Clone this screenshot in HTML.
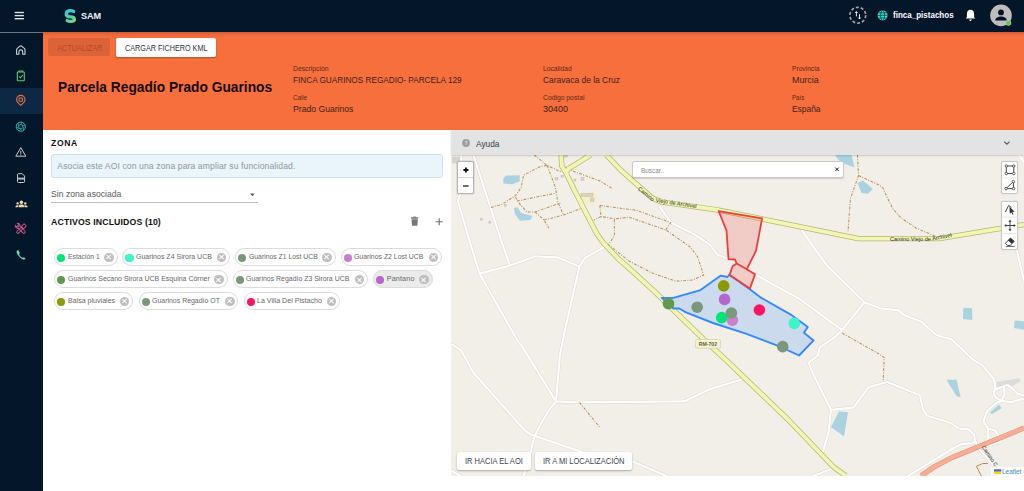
<!DOCTYPE html><html><head><meta charset="utf-8"><style>
*{margin:0;padding:0;box-sizing:border-box}
html,body{width:1024px;height:491px;overflow:hidden;background:#fff;font-family:"Liberation Sans",sans-serif}
.a{position:absolute}
.t{position:absolute;white-space:nowrap;line-height:1}
#hdr{left:0;top:0;width:1024px;height:32px;background:#03162a}
#side{left:0;top:32px;width:43px;height:459px;background:#03162a;border-top:1px solid #6b7480}
#sel{left:0;top:88px;width:43px;height:26px;background:#0d2845}
#orange{left:43px;top:32px;width:981px;height:98px;background:#f86f3e}
#map{left:452px;top:130px;width:572px;height:346px;background:#f2efe9;overflow:hidden}
#help{left:452px;top:130px;width:572px;height:25px;background:#e0e0e0;border-top-left-radius:3px;box-shadow:0 1px 2px rgba(0,0,0,.12)}
.lbl{font-size:6.5px;color:#5a2c18}
.val{font-size:8.5px;color:#3e2216}
.chip{position:absolute;height:18px;border:1px solid #dcdcdc;border-radius:9px;background:#fff}
.chip .d{position:absolute;left:2.5px;top:4px;width:8px;height:8px;border-radius:50%}
.chip .x{position:absolute;top:3.5px;width:9.5px;height:9.5px;border-radius:50%;background:#bfbfbf}
.chip .x:before,.chip .x:after{content:"";position:absolute;left:4.1px;top:1.8px;width:1.3px;height:6px;background:#fff;transform:rotate(45deg)}
.chip .x:after{transform:rotate(-45deg)}
.chip .tx{position:absolute;left:13px;top:4.5px;font-size:7px;color:#666;white-space:nowrap;line-height:1}
.btn{position:absolute;background:#fff;border-radius:2px;box-shadow:0 1px 2px rgba(0,0,0,.3)}
</style></head><body>
<div id="hdr" class="a"></div><div id="side" class="a"></div><div id="sel" class="a"></div><div id="orange" class="a"></div><div class="a" style="left:43px;top:32px;width:981px;height:5px;background:linear-gradient(rgba(0,0,0,.17),rgba(0,0,0,.06) 50%,rgba(0,0,0,0))"></div>
<svg class="a" style="left:0;top:0" width="1024" height="270" viewBox="0 0 1024 270">
<defs><linearGradient id="lg" x1="0" y1="0" x2="1" y2="1"><stop offset="0" stop-color="#39c9d6"/><stop offset="1" stop-color="#7fdc7a"/></linearGradient></defs>
<!-- hamburger -->
<g fill="#dfe3e8"><rect x="14.7" y="11.8" width="9.2" height="1.4"/><rect x="14.7" y="14.9" width="9.2" height="1.4"/><rect x="14.7" y="18" width="9.2" height="1.4"/></g>
<!-- logo S -->
<defs><linearGradient id="sg" gradientUnits="userSpaceOnUse" x1="66" y1="11" x2="74" y2="22"><stop offset="0" stop-color="#35c6d8"/><stop offset=".45" stop-color="#4fcdb8"/><stop offset="1" stop-color="#80db7c"/></linearGradient></defs>
<path d="M73.6 11.4 C72.6 10.8 71.4 10.6 70.2 10.6 C67.6 10.6 66.3 12.2 66.3 14 C66.3 15.8 68 16.8 70.4 16.8 C72.8 16.8 74.4 17.8 74.4 19.6 C74.4 21.4 72.8 21.4 70.6 21.4 C69.4 21.4 68.2 21.2 67.2 20.6" fill="none" stroke="url(#sg)" stroke-width="3.3" stroke-linecap="round"/>
<!-- right header icons -->
<circle cx="857.8" cy="15.2" r="7.9" fill="none" stroke="#a3a3a3" stroke-width="1.7" stroke-dasharray="3 2"/>
<g stroke="#fff" stroke-width=".9" fill="none"><path d="M856.4 16.4 V11.8 M855.2 13 L856.4 11.6 L857.6 13"/><path d="M859.5 14.2 V18.8 M858.3 17.6 L859.5 19 L860.7 17.6"/></g>
<circle cx="882.6" cy="15.4" r="6.4" fill="#000a12"/>
<circle cx="882.6" cy="15.4" r="5" fill="#33ddd5"/>
<g stroke="#0a3a40" stroke-width=".75" fill="none"><ellipse cx="882.6" cy="15.4" rx="2" ry="5"/><path d="M877.6 15.4 H887.6 M878.2 12.8 H887 M878.2 18 H887"/></g>
<path d="M970.5 9.8 C968 9.8 966.9 11.8 966.9 14 V17.2 L965.6 18.6 H975.4 L974.1 17.2 V14 C974.1 11.8 973 9.8 970.5 9.8 Z M969.2 19.5 H971.8 C971.8 20.4 971.2 21 970.5 21 C969.8 21 969.2 20.4 969.2 19.5Z" fill="#fff"/>
<circle cx="1001" cy="15.4" r="10.8" fill="#bdbdbd"/>
<circle cx="1001" cy="12.4" r="2.9" fill="#031428"/>
<path d="M995.3 20.6 C995.3 17.6 998.5 16.6 1001 16.6 C1003.5 16.6 1006.7 17.6 1006.7 20.6 Z" fill="#031428"/>
<circle cx="1008.4" cy="23" r="2.8" fill="#bdbdbd"/>
<circle cx="1008.4" cy="23" r="2.1" fill="#4cd137"/>
<!-- sidebar icons -->
<path d="M16.6 54.2 V49.8 Q16.6 49 17.3 48.4 L19.9 46.2 Q20.8 45.5 21.7 46.2 L24.3 48.4 Q25 49 25 49.8 V54.2 H22.7 V51.8 Q22.7 49.9 20.8 49.9 Q18.9 49.9 18.9 51.8 V54.2 Z" fill="none" stroke="#cfd3d8" stroke-width="1.1" stroke-linejoin="round"/>
<g fill="none" stroke="#67c26f" stroke-width="1.1"><rect x="17.3" y="72" width="7" height="8.8" rx="0.8"/><path d="M18.9 72 V71 H22.7 V72"/><path d="M19 76.4 L20.4 77.8 L22.8 75"/></g>
<g fill="none" stroke="#e8733f" stroke-width="1.1"><path d="M20.8 105.4 C18.2 103.4 16.6 101.6 16.6 99.6 A4.2 4.2 0 0 1 25 99.6 C25 101.6 23.4 103.4 20.8 105.4 Z"/><circle cx="20.8" cy="99.8" r="1.9"/></g>
<g fill="none" stroke="#2bbfb3" stroke-width="1"><circle cx="20.8" cy="126.7" r="4.6"/><path d="M23.02 127.30 L19.36 130.96 M21.40 128.92 L16.39 127.58 M19.17 128.33 L17.83 123.32 M18.58 126.10 L22.24 122.44 M20.20 124.48 L25.21 125.82 M22.43 125.07 L23.77 130.08" stroke-width=".8"/></g>
<g fill="none" stroke="#c7ccd2" stroke-width="1"><path d="M20.8 147.6 L25.8 156.2 H15.8 Z"/><path d="M20.8 150.8 V153.6"/></g><circle cx="20.8" cy="154.8" r="0.5" fill="#c7ccd2"/>
<g><path d="M18.6 173.7 H22.2 L24.6 176.1 V181.4 Q24.6 182.5 23.5 182.5 H18.6 Q17.5 182.5 17.5 181.4 V174.8 Q17.5 173.7 18.6 173.7 Z" fill="none" stroke="#c9cdd2" stroke-width="1"/><rect x="18.1" y="177.6" width="6" height="2" fill="#b3b8be"/></g>
<g fill="#f2dcae"><circle cx="21.4" cy="202.2" r="1.75"/><circle cx="17.6" cy="203.4" r="1.2"/><circle cx="25.3" cy="203.4" r="1.2"/><path d="M18.9 207.3 V205.8 Q18.9 204.5 20.3 204.5 H22.5 Q23.9 204.5 23.9 205.8 V207.3 Z M15.3 207.3 Q15.3 205.2 17.4 205.2 H18.4 V207.3 Z M24.4 205.2 H25.6 Q27.7 205.2 27.7 207.3 H24.4 Z"/></g>
<g fill="none" stroke="#c9558a" stroke-width=".95"><g transform="rotate(-45 21 229)"><rect x="19.7" y="225.2" width="2.6" height="9.2" rx="1.3"/><path d="M19.7 226.4 C18.2 225.6 18.2 223.2 19.6 222.4 V224.4 H22.4 V222.4 C23.8 223.2 23.8 225.6 22.3 226.4"/></g><g transform="rotate(45 21 229)"><rect x="19.8" y="227.6" width="2.4" height="7" rx="1.2"/><rect x="19.4" y="223" width="3.2" height="4" rx=".6"/></g></g>
<path d="M17 250.6 C16.4 251.2 16.4 252.6 17.6 254.4 C18.8 256.4 21.2 258.6 23.2 259.4 C24.4 259.8 25.2 259.4 25.6 258.8 L24 257.2 L22.4 257.8 C21 257 19.8 255.8 19.1 254.4 L19.8 252.8 L18.4 250.2 Z" fill="#62e3b5"/>
</svg>
<div class="t" style="left:80.80px;top:11.08px;font-size:9.59px;color:#f2f4f6;font-weight:bold;transform:scaleX(0.9475);transform-origin:0 0;">SAM</div>
<div class="t" style="left:892.60px;top:11.32px;font-size:8.72px;color:#fff;font-weight:bold;transform:scaleX(0.9194);transform-origin:0 0;">finca_pistachos</div>
<div class="a" style="left:48px;top:38px;width:62px;height:18.4px;background:rgba(0,0,0,.11);border-radius:2px"></div>
<div class="t" style="left:56.70px;top:43.52px;font-size:8.72px;color:rgba(0,0,0,.25);transform:scaleX(0.8365);transform-origin:0 0;">ACTUALIZAR</div>
<div class="btn" style="left:116px;top:38px;width:100px;height:18.5px"></div>
<div class="t" style="left:124.50px;top:43.52px;font-size:8.72px;color:#2e3540;transform:scaleX(0.8305);transform-origin:0 0;">CARGAR FICHERO KML</div>
<div class="t" style="left:57.90px;top:80.81px;font-size:13.81px;color:#150b06;font-weight:bold;transform:scaleX(0.9974);transform-origin:0 0;">Parcela Regadío Prado Guarinos</div>
<div class="t" style="left:293.30px;top:66.17px;font-size:7.12px;color:#5b2a15;transform:scaleX(0.9541);transform-origin:0 0;">Descripción</div>
<div class="t" style="left:293.30px;top:76.27px;font-size:9.01px;color:#40231a;transform:scaleX(0.9118);transform-origin:0 0;">FINCA GUARINOS REGADIO- PARCELA 129</div>
<div class="t" style="left:293.30px;top:94.67px;font-size:7.12px;color:#5b2a15;transform:scaleX(0.8780);transform-origin:0 0;">Calle</div>
<div class="t" style="left:293.30px;top:104.67px;font-size:9.01px;color:#40231a;transform:scaleX(0.9585);transform-origin:0 0;">Prado Guarinos</div>
<div class="t" style="left:542.50px;top:66.17px;font-size:7.12px;color:#5b2a15;transform:scaleX(0.9429);transform-origin:0 0;">Localidad</div>
<div class="t" style="left:542.50px;top:76.27px;font-size:9.01px;color:#40231a;transform:scaleX(0.9374);transform-origin:0 0;">Caravaca de la Cruz</div>
<div class="t" style="left:542.50px;top:94.67px;font-size:7.12px;color:#5b2a15;transform:scaleX(0.9528);transform-origin:0 0;">Codigo postal</div>
<div class="t" style="left:542.50px;top:104.67px;font-size:9.01px;color:#40231a;transform:scaleX(0.9976);transform-origin:0 0;">30400</div>
<div class="t" style="left:792.00px;top:66.17px;font-size:7.12px;color:#5b2a15;transform:scaleX(0.9354);transform-origin:0 0;">Provincia</div>
<div class="t" style="left:792.00px;top:76.27px;font-size:9.01px;color:#40231a;transform:scaleX(0.9893);transform-origin:0 0;">Murcia</div>
<div class="t" style="left:792.00px;top:94.67px;font-size:7.12px;color:#5b2a15;transform:scaleX(0.8631);transform-origin:0 0;">País</div>
<div class="t" style="left:792.00px;top:104.67px;font-size:9.01px;color:#40231a;transform:scaleX(0.9324);transform-origin:0 0;">España</div>
<div class="t" style="left:51.10px;top:139.14px;font-size:8.58px;color:#121212;font-weight:bold;letter-spacing:0.602px;">ZONA</div>
<div class="a" style="left:51px;top:154px;width:392px;height:23.5px;background:#eaf4fb;border:1px solid #cae2f2;border-radius:3px"></div>
<div class="t" style="left:57.30px;top:162.14px;font-size:8.58px;color:#8e98a2;letter-spacing:0.109px;">Asocia este AOI con una zona para ampliar su funcionalidad.</div>
<div class="t" style="left:51.10px;top:190.04px;font-size:8.58px;color:#5a5a5a;">Sin zona asociada</div>
<div class="a" style="left:51px;top:202px;width:207px;height:1px;background:#bdbdbd"></div>
<svg class="a" style="left:248px;top:192px" width="10" height="6"><path d="M2 1.6 H6.8 L4.4 4.3 Z" fill="#5c5c5c"/></svg>
<div class="t" style="left:51.10px;top:217.82px;font-size:8.72px;color:#121212;font-weight:bold;letter-spacing:0.125px;">ACTIVOS INCLUIDOS (10)</div>
<svg class="a" style="left:405px;top:212px" width="42" height="18"><g fill="#777"><rect x="6" y="5.2" width="7.4" height="1.5" rx=".4"/><rect x="8.3" y="4.6" width="2.8" height="1"/><path d="M6.6 7.2 H12.8 L12.4 13.8 H7 Z"/></g><path d="M30.7 9.7 H37.7 M34.2 6.2 V13.2" stroke="#6f6f6f" stroke-width="1.1"/></svg>
<div class="chip" style="left:54.0px;top:248.0px;width:63.5px;background:#fff"><div class="d" style="background:#00e676;left:2.3px;top:4.5px;width:8.2px;height:8.2px"></div><div class="x" style="left:49.2px"></div></div>
<div class="t" style="left:67.70px;top:253.15px;font-size:7.27px;color:#676767;transform:scaleX(0.9341);transform-origin:0 0;">Estación 1</div>
<div class="chip" style="left:122.1px;top:248.0px;width:107.7px;background:#fff"><div class="d" style="background:#3df5c6;left:2.3px;top:4.5px;width:8.2px;height:8.2px"></div><div class="x" style="left:93.5px"></div></div>
<div class="t" style="left:135.80px;top:253.15px;font-size:7.27px;color:#676767;transform:scaleX(0.9637);transform-origin:0 0;">Guarinos Z4 Sirora UCB</div>
<div class="chip" style="left:235.0px;top:248.0px;width:100.5px;background:#fff"><div class="d" style="background:#7d977c;left:2.3px;top:4.5px;width:8.2px;height:8.2px"></div><div class="x" style="left:86.2px"></div></div>
<div class="t" style="left:248.70px;top:253.15px;font-size:7.27px;color:#676767;transform:scaleX(0.9397);transform-origin:0 0;">Guarinos Z1 Lost UCB</div>
<div class="chip" style="left:340.7px;top:248.0px;width:101.2px;background:#fff"><div class="d" style="background:#c77ed0;left:2.3px;top:4.5px;width:8.2px;height:8.2px"></div><div class="x" style="left:86.9px"></div></div>
<div class="t" style="left:354.40px;top:253.15px;font-size:7.27px;color:#676767;transform:scaleX(0.9493);transform-origin:0 0;">Guarinos Z2 Lost UCB</div>
<div class="chip" style="left:54.0px;top:270.3px;width:173.6px;background:#fff"><div class="d" style="background:#5f9949;left:2.3px;top:4.5px;width:8.2px;height:8.2px"></div><div class="x" style="left:159.3px"></div></div>
<div class="t" style="left:67.70px;top:275.45px;font-size:7.27px;color:#676767;transform:scaleX(0.9617);transform-origin:0 0;">Guarinos Secano Sirora UCB Esquina Córner</div>
<div class="chip" style="left:232.7px;top:270.3px;width:135.1px;background:#fff"><div class="d" style="background:#7d977c;left:2.3px;top:4.5px;width:8.2px;height:8.2px"></div><div class="x" style="left:120.9px"></div></div>
<div class="t" style="left:246.40px;top:275.45px;font-size:7.27px;color:#676767;transform:scaleX(0.9542);transform-origin:0 0;">Guarinos Regadío Z3 Sirora UCB</div>
<div class="chip" style="left:373.0px;top:270.3px;width:59.6px;background:#ebebeb"><div class="d" style="background:#b565cd;left:2.3px;top:4.5px;width:8.2px;height:8.2px"></div><div class="x" style="left:45.4px"></div></div>
<div class="t" style="left:386.70px;top:275.45px;font-size:7.27px;color:#676767;letter-spacing:0.121px;">Pantano</div>
<div class="chip" style="left:54.0px;top:292.0px;width:78.9px;background:#fff"><div class="d" style="background:#8a9a00;left:2.3px;top:4.5px;width:8.2px;height:8.2px"></div><div class="x" style="left:64.7px"></div></div>
<div class="t" style="left:67.70px;top:297.15px;font-size:7.27px;color:#676767;transform:scaleX(0.9716);transform-origin:0 0;">Balsa pluviales</div>
<div class="chip" style="left:138.5px;top:292.0px;width:99.8px;background:#fff"><div class="d" style="background:#7d977c;left:2.3px;top:4.5px;width:8.2px;height:8.2px"></div><div class="x" style="left:85.6px"></div></div>
<div class="t" style="left:152.20px;top:297.15px;font-size:7.27px;color:#676767;transform:scaleX(0.9564);transform-origin:0 0;">Guarinos Regadío OT</div>
<div class="chip" style="left:243.5px;top:292.0px;width:96.7px;background:#fff"><div class="d" style="background:#ff1464;left:2.3px;top:4.5px;width:8.2px;height:8.2px"></div><div class="x" style="left:82.4px"></div></div>
<div class="t" style="left:257.20px;top:297.15px;font-size:7.27px;color:#676767;transform:scaleX(0.9756);transform-origin:0 0;">La Villa Del Pistacho</div>
<svg class="a" style="left:451px;top:130px" width="573" height="346" viewBox="451 130 573 346">
<rect x="451" y="130" width="573" height="346" fill="#f2efe9"/>
<path d="M503.3 178.5 L506.0 175.6 L519.8 175.3 L519.5 181.5 L512.0 184.2 L503.3 183.5Z" fill="#aad3df"/>
<path d="M514.0 208.0 L517.5 207.3 L521.0 213.0 L532.6 216.0 L530.5 220.0 L520.0 220.8 L515.0 214.0Z" fill="#aad3df"/>
<path d="M835.0 155.0 L851.5 155.0 L854.5 167.3 L846.0 164.5 L838.5 160.0Z" fill="#aad3df"/>
<path d="M857.5 183.0 L863.0 180.6 L872.8 189.0 L868.0 193.8 L861.5 193.0Z" fill="#aad3df"/>
<path d="M963.3 307.7 L972.0 308.2 L972.4 320.0 L963.0 319.0Z" fill="#aad3df"/>
<path d="M1014.6 320.5 L1024.0 321.2 L1024.0 329.7 L1014.0 328.0Z" fill="#aad3df"/>
<path d="M946.4 379.8 L956.6 379.8 L960.7 397.3 L956.6 396.3Z" fill="#aad3df"/>
<path d="M839.1 411.4 L848.0 412.2 L844.0 436.6 L831.0 426.9Z" fill="#aad3df"/>
<path d="M989.9 412.5 L999.0 404.6 L1001.5 408.2 L991.7 414.3Z" fill="#aad3df"/>
<rect x="452" y="157" width="8.5" height="6.4" fill="#d6d3cf"/>
<path d="M996.6 382 L1018.6 378.3 L1021 380.8 L1013.7 385.6 L996.6 387.5Z" fill="#dcdcdc"/>
<path d="M580.6 192.3 L593.6 191.5 L597 197 L595 205 L582 203Z" fill="#f3efc6"/>
<g fill="#d9d0c9" stroke="#c4b6ab" stroke-width=".4"><rect x="581" y="193.5" width="12" height="3"/><rect x="590.5" y="198" width="3.5" height="3.5"/><rect x="555" y="177.5" width="3" height="2.5"/><rect x="561" y="175.5" width="2.5" height="2"/><rect x="569" y="165" width="3" height="2.5"/><rect x="574" y="179" width="2" height="2"/><rect x="581" y="177.5" width="3" height="3"/><rect x="564.5" y="155" width="3" height="2"/><rect x="480.6" y="218.6" width="1.8" height="1.8"/><rect x="488.9" y="221.6" width="1.8" height="1.8"/><rect x="504.4" y="204.2" width="2" height="2"/></g>
<path d="M461.2 155.0 L461.5 162.0 L460.0 195.2 L457.9 201.3 L460.5 210.0 L469.3 240.0 L479.5 273.6 L517.2 340.0 L523.3 348.3 L556.0 401.4 M473.4 155.0 L501.0 240.0 L510.0 265.5 M479.5 273.6 L510.0 265.5 L535.6 256.3 L557.0 257.3 L579.4 266.5 M579.4 266.5 L584.5 258.3 L602.0 248.2 L607.0 245.0 M579.4 266.5 L565.0 330.0 L560.0 354.5 L556.0 401.4 M556.0 401.4 L578.5 402.4 L683.9 401.4 L710.3 389.1 L743.3 379.0 M556.0 401.4 L547.8 411.6 L537.6 430.0 L534.2 437.5 L530.2 453.7 L523.7 476.0 M452.0 344.3 L461.2 350.4 L473.4 372.8 L524.3 430.0 L530.2 434.2 L582.3 452.1 L634.0 461.9 L666.5 476.0 M452.0 470.8 L460.0 476.0 M659.7 206.7 L670.7 222.6 L695.1 234.8 L709.8 244.6 L717.1 254.4 L728.5 259.1 M755.0 274.3 L798.4 298.2 L842.0 330.0 L836.0 336.1 L819.8 347.3 L817.8 355.5 L808.6 362.6 L811.6 370.8 L831.0 409.8 L828.5 432.6 L822.8 452.1 M799.3 226.4 L815.6 250.0 L827.8 266.5 L864.5 302.2 L880.0 308.3 L898.5 310.3 L904.6 315.4 L921.0 321.5 L935.0 333.9 L939.3 336.1 L951.5 339.2 L973.4 360.0 L982.0 364.9 L994.2 379.5 L995.4 388.1 L993.6 393.0 L995.4 397.2 L1001.5 400.9 M864.5 302.2 L842.0 330.0 M831.0 409.8 L853.8 407.3 L868.6 387.1 L880.0 384.0 L887.3 382.0 L919.9 395.3 L923.0 409.5 L927.0 415.7 L945.7 421.2 L952.8 424.3 L958.5 428.5 L968.5 429.3 L974.2 435.0 L975.0 440.7 L973.5 443.1 L961.4 444.2 L952.8 448.5 L908.2 476.0 M975.0 440.7 L980.0 450.0 L995.6 467.8 M996.0 389.3 L1004.0 386.3 L1007.6 385.0 L1011.3 387.5 L1017.4 393.6 L1024.0 395.4 M1004.0 386.3 L1004.6 394.2 L1001.5 400.9 L1011.3 402.1 L1024.0 398.5 M1001.5 400.9 L996.6 402.7 L986.9 411.3 L983.5 421.4 L987.8 428.5 L988.5 437.8 L981.4 447.8 M987.8 428.5 L995.6 430.7 L998.5 436.4 L999.9 442.1 L981.4 447.8 M1016.7 250.0 L1024.0 280.8 M1019.0 155.0 L1024.0 162.0 M813.0 476.0 L831.0 469.2 M574.1 170.4 L579.8 173.6" fill="none" stroke="#d8d3cc" stroke-width="3" stroke-linejoin="round" stroke-linecap="round"/>
<path d="M461.2 155.0 L461.5 162.0 L460.0 195.2 L457.9 201.3 L460.5 210.0 L469.3 240.0 L479.5 273.6 L517.2 340.0 L523.3 348.3 L556.0 401.4 M473.4 155.0 L501.0 240.0 L510.0 265.5 M479.5 273.6 L510.0 265.5 L535.6 256.3 L557.0 257.3 L579.4 266.5 M579.4 266.5 L584.5 258.3 L602.0 248.2 L607.0 245.0 M579.4 266.5 L565.0 330.0 L560.0 354.5 L556.0 401.4 M556.0 401.4 L578.5 402.4 L683.9 401.4 L710.3 389.1 L743.3 379.0 M556.0 401.4 L547.8 411.6 L537.6 430.0 L534.2 437.5 L530.2 453.7 L523.7 476.0 M452.0 344.3 L461.2 350.4 L473.4 372.8 L524.3 430.0 L530.2 434.2 L582.3 452.1 L634.0 461.9 L666.5 476.0 M452.0 470.8 L460.0 476.0 M659.7 206.7 L670.7 222.6 L695.1 234.8 L709.8 244.6 L717.1 254.4 L728.5 259.1 M755.0 274.3 L798.4 298.2 L842.0 330.0 L836.0 336.1 L819.8 347.3 L817.8 355.5 L808.6 362.6 L811.6 370.8 L831.0 409.8 L828.5 432.6 L822.8 452.1 M799.3 226.4 L815.6 250.0 L827.8 266.5 L864.5 302.2 L880.0 308.3 L898.5 310.3 L904.6 315.4 L921.0 321.5 L935.0 333.9 L939.3 336.1 L951.5 339.2 L973.4 360.0 L982.0 364.9 L994.2 379.5 L995.4 388.1 L993.6 393.0 L995.4 397.2 L1001.5 400.9 M864.5 302.2 L842.0 330.0 M831.0 409.8 L853.8 407.3 L868.6 387.1 L880.0 384.0 L887.3 382.0 L919.9 395.3 L923.0 409.5 L927.0 415.7 L945.7 421.2 L952.8 424.3 L958.5 428.5 L968.5 429.3 L974.2 435.0 L975.0 440.7 L973.5 443.1 L961.4 444.2 L952.8 448.5 L908.2 476.0 M975.0 440.7 L980.0 450.0 L995.6 467.8 M996.0 389.3 L1004.0 386.3 L1007.6 385.0 L1011.3 387.5 L1017.4 393.6 L1024.0 395.4 M1004.0 386.3 L1004.6 394.2 L1001.5 400.9 L1011.3 402.1 L1024.0 398.5 M1001.5 400.9 L996.6 402.7 L986.9 411.3 L983.5 421.4 L987.8 428.5 L988.5 437.8 L981.4 447.8 M987.8 428.5 L995.6 430.7 L998.5 436.4 L999.9 442.1 L981.4 447.8 M1016.7 250.0 L1024.0 280.8 M1019.0 155.0 L1024.0 162.0 M813.0 476.0 L831.0 469.2 M574.1 170.4 L579.8 173.6" fill="none" stroke="#fefefe" stroke-width="2.2" stroke-linejoin="round" stroke-linecap="round"/>
<path d="M491.0 207.4 L501.6 204.6 L515.5 195.6 L521.2 187.5 L523.6 175.2 L540.7 166.3 L547.2 165.5 M534.2 155.0 L547.2 165.5 L561.1 172.0 M547.2 165.5 L555.4 187.5 L557.8 202.1 L563.5 215.1 M515.5 197.0 L519.5 203.7 L526.9 211.9 L535.0 211.9 L560.3 202.9 M517.0 201.0 L555.4 193.2 M535.0 211.9 L544.0 220.0 L548.9 228.2 M544.0 220.0 L563.5 215.1 L580.6 208.6 M566.8 168.7 L579.8 173.6 L600.0 181.0 L612.0 188.3 M599.8 205.5 L636.5 210.3 L670.7 222.6 L665.8 229.9 M601.0 216.5 L593.7 220.1 M599.8 205.5 L601.0 216.5 L614.4 218.9 L629.1 217.2 L665.8 229.9 L690.2 247.0 L697.6 256.8 L703.7 275.1 L692.7 280.0 L675.6 281.2 L651.0 272.5 L629.0 261.0 L608.3 244.6 L614.4 236.0 L614.4 218.9 M857.5 155.0 L858.5 175.5 L850.4 199.0 L848.0 231.5 M858.5 175.5 L880.0 185.5 L883.0 188.0 L887.0 197.0 L893.0 209.0 L901.0 218.0 L916.0 228.0 L937.2 237.0 M842.2 333.1 L880.0 354.5 L884.2 357.5 L883.2 381.0 M579.5 402.4 L600.2 427.8" fill="none" stroke="#b8945a" stroke-width="1.05" stroke-dasharray="2.8 1.4 1 1.4"/>
<path d="M976.4 466.3 L982.8 463.5 L987.8 463.5 M976.4 466.3 L981.4 476" fill="none" stroke="#b48f4a" stroke-width="1"/>
<path d="M921.0 476.0 L934.0 467.0 L952.0 457.5 L1024.0 428.0" fill="none" stroke="#e0937c" stroke-width="5.2"/><path d="M921.0 476.0 L934.0 467.0 L952.0 457.5 L1024.0 428.0" fill="none" stroke="#f7ad96" stroke-width="4"/>
<path d="M561.1 155.0 L561.9 166.3 L566.0 172.8 L574.3 190.0 L590.7 222.0 L597.0 234.0 L603.0 242.5 L618.5 259.0 L631.0 270.0 L654.0 291.0 L704.3 340.0 L726.0 360.0 L788.5 420.0 L833.5 467.0 L846.0 476.0 M566.0 172.8 L568.4 168.7 L576.5 163.8 L590.4 155.0 M606.3 155.0 L620.6 170.0 L652.3 198.1 L660.9 201.8 L720.0 210.3 L858.4 238.6 L939.2 238.6 L1024.0 224.6" fill="none" stroke="#b2b96c" stroke-width="5.4" stroke-linejoin="round"/>
<path d="M561.1 155.0 L561.9 166.3 L566.0 172.8 L574.3 190.0 L590.7 222.0 L597.0 234.0 L603.0 242.5 L618.5 259.0 L631.0 270.0 L654.0 291.0 L704.3 340.0 L726.0 360.0 L788.5 420.0 L833.5 467.0 L846.0 476.0 M566.0 172.8 L568.4 168.7 L576.5 163.8 L590.4 155.0 M606.3 155.0 L620.6 170.0 L652.3 198.1 L660.9 201.8 L720.0 210.3 L858.4 238.6 L939.2 238.6 L1024.0 224.6" fill="none" stroke="#f1f5b6" stroke-width="3.9" stroke-linejoin="round"/>
<g font-family="Liberation Sans" font-size="5.6" fill="#2c2c2c">
<text transform="translate(637.5,189.5) rotate(39)">Camino</text>
<text transform="translate(655.5,202) rotate(8.5)">Viejo de Archivel</text>
<text transform="translate(890,241.4)">Camino Viejo de</text>
<text transform="translate(932.5,240.6) rotate(-11)">Archivel</text>
<text transform="translate(981.5,447) rotate(56)" font-size="5.4">Camino C</text>
</g>
<rect x="695.6" y="339.5" width="24.8" height="8.7" rx="1" fill="#f5f3d0" stroke="#cfcfa9" stroke-width=".7"/>
<text x="698.8" y="346.1" font-family="Liberation Sans" font-size="5.8" font-weight="bold" fill="#5f6444" textLength="18.3" lengthAdjust="spacingAndGlyphs">RM-702</text>
<path d="M661.8 297.9 L673.4 297.9 L700.5 290.1 L720.8 275.6 L727.5 277.0 L729.5 274.7 L749.8 289.2 L761.4 297.9 L790.4 314.3 L807.8 326.9 L803.9 332.7 L813.6 340.4 L799.1 355.5 L778.8 346.2 L745.9 333.7 L713.0 323.0 L686.0 312.4 L679.2 308.5 L673.4 308.5Z" fill="rgba(51,136,255,.2)" stroke="#3388ff" stroke-width="1.9" stroke-linejoin="round"/>
<path d="M718.7 211.2 L762.1 218.3 L756.0 250.9 L746.8 269.2 L755.0 274.3 L749.9 288.6 L729.5 275.0 L732.6 266.2 L736.7 263.5 L735.0 259.5 L728.5 259.1 L726.5 230.5Z" fill="rgba(240,60,60,.2)" stroke="#ee3d3d" stroke-width="1.8" stroke-linejoin="round"/>
<path d="M736.7 263.5 L746.8 269.2" stroke="#ee3d3d" stroke-width="1.6"/>
<circle cx="668.5" cy="303.7" r="5.8" fill="#5f9949"/>
<circle cx="697.2" cy="307.2" r="5.8" fill="#7d977c"/>
<circle cx="723.7" cy="285.9" r="5.8" fill="#8a9a00"/>
<circle cx="724.6" cy="299.4" r="5.8" fill="#b565cd"/>
<circle cx="732.4" cy="320.1" r="5.8" fill="#cc80cc"/>
<circle cx="721.7" cy="317.6" r="5.8" fill="#00e676"/>
<circle cx="731.4" cy="313.0" r="5.8" fill="#7d977c"/>
<circle cx="759.4" cy="310.0" r="5.8" fill="#ff1464"/>
<circle cx="794.3" cy="323.4" r="5.8" fill="#3df5c6"/>
<circle cx="782.7" cy="346.6" r="5.8" fill="#7d977c"/>
</svg>
<div class="a" style="left:451px;top:130px;width:573px;height:25px;background:#e3e3e3;border-top-left-radius:2px;box-shadow:0 1px 2px rgba(0,0,0,.16)"></div>
<svg class="a" style="left:460px;top:137px" width="14" height="14"><circle cx="6" cy="6" r="3.9" fill="#9e9e9e"/><text x="4.4" y="8" font-family="Liberation Sans" font-size="5" font-weight="bold" fill="#e0e0e0">?</text></svg>
<div class="t" style="left:475.90px;top:139.54px;font-size:8.58px;color:#3c3c3c;transform:scaleX(0.9726);transform-origin:0 0;">Ayuda</div>
<svg class="a" style="left:1000px;top:137px" width="14" height="12"><path d="M4.2 4.6 L6.9 7.2 L9.6 4.6" fill="none" stroke="#555" stroke-width="1.1"/></svg>
<div class="a" style="left:457.3px;top:161.3px;width:16.8px;height:32.7px;background:#fff;border:1px solid #b5b5b5;border-radius:2px;box-shadow:0 0 0 .6px rgba(0,0,0,.12)"></div>
<div class="a" style="left:458.3px;top:177.2px;width:14.8px;height:1px;background:#d6d6d6"></div>
<svg class="a" style="left:457.3px;top:161.3px" width="17" height="33"><path d="M6.4 9 H11.4 M8.9 6.5 V11.5" stroke="#111" stroke-width="1.9"/><path d="M6 25 H11.6" stroke="#3a3a3a" stroke-width="1.5"/></svg>
<div class="a" style="left:631.7px;top:161.2px;width:212px;height:17.2px;background:#fff;border:1px solid #c9c9c9;border-radius:2px;box-shadow:0 1px 1px rgba(0,0,0,.15)"></div>
<div class="t" style="left:640.90px;top:166.79px;font-size:6.98px;color:#8a8a8a;transform:scaleX(0.9125);transform-origin:0 0;">Buscar..</div>
<svg class="a" style="left:833px;top:165px" width="8" height="8"><path d="M2.3 2.6 L5.7 6 M5.7 2.6 L2.3 6" stroke="#222" stroke-width="1"/></svg>
<div class="a" style="left:1001.4px;top:161.2px;width:17px;height:33.2px;background:#fff;border:1px solid #c8c8c8;border-radius:2px;box-shadow:0 0 1px rgba(0,0,0,.2)"></div>
<div class="a" style="left:1001.4px;top:200.5px;width:17px;height:49.5px;background:#fff;border:1px solid #c8c8c8;border-radius:2px;box-shadow:0 0 1px rgba(0,0,0,.2)"></div>
<svg class="a" style="left:1000px;top:160px" width="20" height="92" viewBox="1000 160 20 92">
<g stroke="#e2e2e2" stroke-width=".8"><path d="M1002 177.8 H1018 M1002 217 H1018 M1002 233.5 H1018"/></g>
<g fill="none" stroke="#333" stroke-width=".9"><rect x="1006.3" y="166" width="7.5" height="7.5"/><path d="M1006 188.6 L1013.6 188.6 L1013.4 181.6 Z"/></g>
<g fill="#fff" stroke="#333" stroke-width=".75"><circle cx="1006.3" cy="166" r="1.25"/><circle cx="1013.8" cy="166" r="1.25"/><circle cx="1006.3" cy="173.5" r="1.25"/><circle cx="1013.8" cy="173.5" r="1.25"/><circle cx="1006" cy="188.6" r="1.25"/><circle cx="1013.6" cy="188.6" r="1.25"/><circle cx="1013.4" cy="181.6" r="1.25"/></g>
<g fill="none" stroke="#333" stroke-width=".9"><path d="M1005.4 212 L1008.6 205.4 L1011.4 207.4"/></g><path d="M1009.4 206.6 L1014.6 211.8 L1012.4 212 L1013.6 214.4 L1012.6 214.8 L1011.4 212.4 L1009.8 213.8 Z" fill="#333"/>
<path d="M1010 221 V230 M1005.4 225.5 H1014.6" stroke="#333" stroke-width=".9"/><path d="M1010 219.8 L1011.6 221.8 H1008.4Z M1010 231.2 L1011.6 229.2 H1008.4Z M1004.3 225.5 L1006.3 223.9 V227.1Z M1015.7 225.5 L1013.7 223.9 V227.1Z" fill="#333"/>
<path d="M1005.4 243.4 L1010.4 238 L1014.2 241.2 L1010.4 245.4 H1007.4 Z" fill="none" stroke="#333" stroke-width=".9"/><path d="M1008 240.6 L1010.4 238 L1014.2 241.2 L1011.8 243.8 Z" fill="#333"/><path d="M1006 246.4 H1014.6" stroke="#333" stroke-width=".8"/>
</svg>
<div class="btn" style="left:457.1px;top:452.1px;width:73.8px;height:17.6px"></div>
<div class="t" style="left:465.30px;top:457.34px;font-size:8.58px;color:#3b4450;transform:scaleX(0.8767);transform-origin:0 0;">IR HACIA EL AOI</div>
<div class="btn" style="left:534.5px;top:452.1px;width:97.4px;height:17.6px"></div>
<div class="t" style="left:542.70px;top:457.34px;font-size:8.58px;color:#3b4450;transform:scaleX(0.8770);transform-origin:0 0;">IR A MI LOCALIZACIÓN</div>
<div class="a" style="left:990.7px;top:466.9px;width:33.3px;height:9.1px;background:rgba(255,255,255,.8)"></div>
<svg class="a" style="left:993.8px;top:468.7px" width="8" height="6"><rect x="0" y="0.3" width="7.2" height="2.4" fill="#4066c8"/><rect x="0" y="2.7" width="7.2" height="2.4" fill="#ffd500"/></svg>
<div class="t" style="left:1002.20px;top:467.95px;font-size:7.27px;color:#3a93c0;transform:scaleX(0.8845);transform-origin:0 0;">Leaflet</div>
</body></html>
